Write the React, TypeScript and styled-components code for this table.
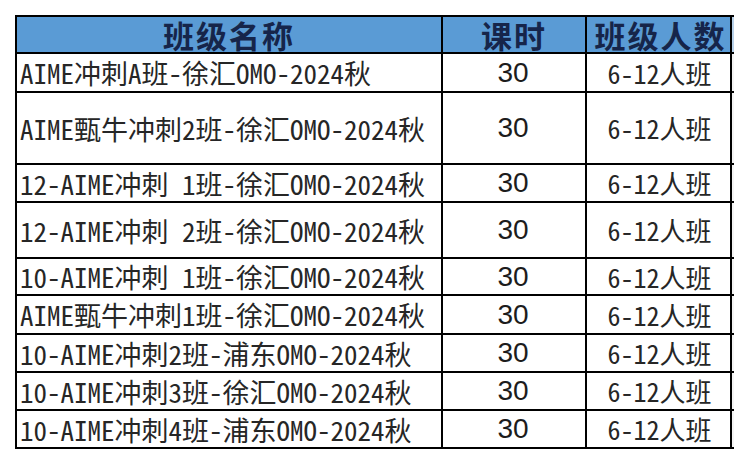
import React from "react";
import styled, { createGlobalStyle } from "styled-components";

const Global = createGlobalStyle`
  html, body { margin: 0; padding: 0; background: #ffffff; overflow: hidden; }
  body { width: 734px; height: 464px; }
`;

const Page = styled.div`
  padding: 15px 0 0 15px;
  width: 734px;
  height: 464px;
  box-sizing: border-box;
`;

const Sheet = styled.div<{ $rows: string }>`
  display: grid;
  grid-template-columns: 424px 142px 143px 2px;
  grid-template-rows: ${(p) => p.$rows};
  gap: 2px;
  padding: 2px 0 2px 2px;
  background: #000000;
  width: max-content;
`;

const HeadCell = styled.div<{ $pad?: number }>`
  background: #5a9bd5;
  color: #16254a;
  font-family: "Noto Sans CJK SC", "Noto Serif CJK SC", serif;
  font-weight: 700;
  font-size: 31px;
  letter-spacing: 2px;
  display: flex;
  align-items: center;
  justify-content: center;
  line-height: 1;
  padding-left: ${(p) => p.$pad ?? 0}px;
`;

const EdgeHead = styled.div`
  background: #b9d2ea;
`;

const Edge = styled.div`
  background: #f4f4f4;
`;

const NameCell = styled.div`
  background: #ffffff;
  color: #262626;
  font-family: "Noto Sans Mono CJK SC", "Noto Sans CJK SC", monospace;
  font-size: 27px;
  white-space: pre;
  display: flex;
  align-items: center;
  padding-left: 3px;
  line-height: 1;
`;

const HoursCell = styled.div`
  background: #ffffff;
  color: #1c1c1c;
  font-family: "Liberation Sans", Arial, sans-serif;
  font-size: 28px;
  display: flex;
  align-items: center;
  justify-content: center;
  padding-right: 2px;
  line-height: 1;
`;

const SizeCell = styled.div`
  background: #ffffff;
  color: #262626;
  font-family: "Noto Sans Mono CJK SC", "Noto Sans CJK SC", monospace;
  font-size: 26px;
  display: flex;
  align-items: center;
  justify-content: center;
  padding-left: 2px;
  line-height: 1;
`;

type Row = { name: string; h: number };

const rows: Row[] = [
  { name: "AIME冲刺A班-徐汇OMO-2024秋", h: 37 },
  { name: "AIME甄牛冲刺2班-徐汇OMO-2024秋", h: 70 },
  { name: "12-AIME冲刺 1班-徐汇OMO-2024秋", h: 36 },
  { name: "12-AIME冲刺 2班-徐汇OMO-2024秋", h: 54 },
  { name: "10-AIME冲刺 1班-徐汇OMO-2024秋", h: 35 },
  { name: "AIME甄牛冲刺1班-徐汇OMO-2024秋", h: 37 },
  { name: "10-AIME冲刺2班-浦东OMO-2024秋", h: 36 },
  { name: "10-AIME冲刺3班-徐汇OMO-2024秋", h: 36 },
  { name: "10-AIME冲刺4班-浦东OMO-2024秋", h: 36 },
];

export default function App() {
  const template = ["35px", ...rows.map((r) => `${r.h}px`)].join(" ");
  return (
    <>
      <Global />
      <Page>
        <Sheet $rows={template}>
          <HeadCell>班级名称</HeadCell>
          <HeadCell>课时</HeadCell>
          <HeadCell $pad={4}>班级人数</HeadCell>
          <EdgeHead />
          {rows.map((r) => (
            <React.Fragment key={r.name}>
              <NameCell>{r.name}</NameCell>
              <HoursCell>30</HoursCell>
              <SizeCell>6-12人班</SizeCell>
              <Edge />
            </React.Fragment>
          ))}
        </Sheet>
      </Page>
    </>
  );
}
